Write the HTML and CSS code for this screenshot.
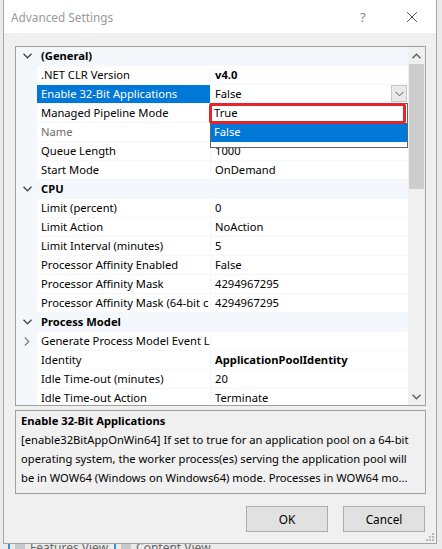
FILE: index.html
```html
<!DOCTYPE html>
<html>
<head>
<meta charset="utf-8">
<title>Advanced Settings</title>
<link rel="stylesheet" href="styles.css">
</head>
<body>
<div class="desktop">
  <div class="dialog">
    <div class="titlebar">
      <span class="title">Advanced Settings</span>
      <span class="help">?</span>
      <span class="close">
        <svg width="12" height="12" viewBox="0 0 12 12"><path d="M1 1L11 11M11 1L1 11" stroke="#555" stroke-width="1" fill="none"/></svg>
      </span>
    </div>

    <div class="content">
      <div class="grid">
        <div class="rows">
          <div class="row cat">
            <span class="gut"><svg width="9" height="6" viewBox="0 0 9 6"><path d="M0.5 0.8L4.5 4.8L8.5 0.8" stroke="#444" stroke-width="1.3" fill="none"/></svg></span>
            <span class="cat-name">(General)</span>
          </div>
          <div class="row"><span class="gut"></span><span class="name">.NET CLR Version</span><span class="val strong">v4.0</span></div>
          <div class="row selected">
            <span class="gut"></span><span class="name">Enable 32-Bit Applications</span>
            <span class="val editor">
              <span class="editor-text">False</span>
              <span class="drop-btn"><svg width="9" height="6" viewBox="0 0 9 6"><path d="M0.5 0.8L4.5 4.8L8.5 0.8" stroke="#555" stroke-width="1" fill="none"/></svg></span>
              <span class="droplist">
                <span class="opt">True</span>
                <span class="opt opt-sel">False</span>
                <span class="mark"></span>
              </span>
            </span>
          </div>
          <div class="row"><span class="gut"></span><span class="name">Managed Pipeline Mode</span><span class="val"></span></div>
          <div class="row"><span class="gut"></span><span class="name disabled">Name</span><span class="val"></span></div>
          <div class="row"><span class="gut"></span><span class="name">Queue Length</span><span class="val">1000</span></div>
          <div class="row"><span class="gut"></span><span class="name">Start Mode</span><span class="val">OnDemand</span></div>

          <div class="row cat">
            <span class="gut"><svg width="9" height="6" viewBox="0 0 9 6"><path d="M0.5 0.8L4.5 4.8L8.5 0.8" stroke="#444" stroke-width="1.3" fill="none"/></svg></span>
            <span class="cat-name">CPU</span>
          </div>
          <div class="row"><span class="gut"></span><span class="name">Limit (percent)</span><span class="val">0</span></div>
          <div class="row"><span class="gut"></span><span class="name">Limit Action</span><span class="val">NoAction</span></div>
          <div class="row"><span class="gut"></span><span class="name">Limit Interval (minutes)</span><span class="val">5</span></div>
          <div class="row"><span class="gut"></span><span class="name">Processor Affinity Enabled</span><span class="val">False</span></div>
          <div class="row"><span class="gut"></span><span class="name">Processor Affinity Mask</span><span class="val">4294967295</span></div>
          <div class="row"><span class="gut"></span><span class="name">Processor Affinity Mask (64-bit c</span><span class="val">4294967295</span></div>

          <div class="row cat">
            <span class="gut"><svg width="9" height="6" viewBox="0 0 9 6"><path d="M0.5 0.8L4.5 4.8L8.5 0.8" stroke="#444" stroke-width="1.3" fill="none"/></svg></span>
            <span class="cat-name">Process Model</span>
          </div>
          <div class="row">
            <span class="gut"><svg width="6" height="9" viewBox="0 0 6 9"><path d="M0.8 0.5L4.8 4.5L0.8 8.5" stroke="#777" stroke-width="1.1" fill="none"/></svg></span>
            <span class="name">Generate Process Model Event L</span><span class="val"></span>
          </div>
          <div class="row"><span class="gut"></span><span class="name">Identity</span><span class="val strong">ApplicationPoolIdentity</span></div>
          <div class="row"><span class="gut"></span><span class="name">Idle Time-out (minutes)</span><span class="val">20</span></div>
          <div class="row"><span class="gut"></span><span class="name">Idle Time-out Action</span><span class="val">Terminate</span></div>
        </div>

        <div class="scrollbar">
          <span class="sb-btn"><svg width="9" height="6" viewBox="0 0 9 6"><path d="M0.5 5.2L4.5 1.2L8.5 5.2" stroke="#606060" stroke-width="1.4" fill="none"/></svg></span>
          <span class="sb-track"><span class="sb-thumb"></span></span>
          <span class="sb-btn"><svg width="9" height="6" viewBox="0 0 9 6"><path d="M0.5 0.8L4.5 4.8L8.5 0.8" stroke="#606060" stroke-width="1.4" fill="none"/></svg></span>
        </div>
      </div>

      <div class="desc">
        <div class="desc-title">Enable 32-Bit Applications</div>
        <div class="desc-line">[enable32BitAppOnWin64] If set to true for an application pool on a 64-bit</div>
        <div class="desc-line">operating system, the worker process(es) serving the application pool will</div>
        <div class="desc-line">be in WOW64 (Windows on Windows64) mode. Processes in WOW64 mo...</div>
      </div>

      <div class="buttons">
        <button class="btn">OK</button>
        <button class="btn">Cancel</button>
      </div>
    </div>

    <svg class="grip" width="8" height="8" viewBox="0 0 8 8">
      <rect x="6" y="0" width="2" height="2" fill="#b8b8b8"/>
      <rect x="3" y="3" width="2" height="2" fill="#b8b8b8"/>
      <rect x="6" y="3" width="2" height="2" fill="#b8b8b8"/>
      <rect x="0" y="6" width="2" height="2" fill="#b8b8b8"/>
      <rect x="3" y="6" width="2" height="2" fill="#b8b8b8"/>
      <rect x="6" y="6" width="2" height="2" fill="#b8b8b8"/>
    </svg>
  </div>

  <div class="tabs">
    <span class="tab"><span class="tab-icon"></span>Features View</span>
    <span class="tab"><span class="tab-icon"></span>Content View</span>
  </div>
</div>
</body>
</html>
```
FILE: styles.css
```css
* { box-sizing: border-box; }

html, body {
  margin: 0;
  padding: 0;
  overflow: hidden;
}

body {
  font-family: "Noto Sans", "Open Sans", sans-serif;
  font-size: 11.2px;
  color: #000;
  background: #e9e9e9;
}

.desktop {
  width: 442px;
  height: 549px;
  overflow: hidden;
  display: flex;
  flex-direction: column;
  background: #ebebeb;
}

/* dialog window */
.dialog {
  position: relative;
  margin-left: 3px;
  width: 434px;
  height: 544px;
  flex: none;
  border: 1px solid #a3a3a3;
  border-top: none;
  display: flex;
  flex-direction: column;
  background: #f0f0f0;
}

.titlebar {
  height: 33px;
  background: #fff;
  display: flex;
  align-items: center;
  padding-left: 7px;
  flex: none;
}

.title {
  color: #9a9a9a;
  font-size: 11.8px;
  flex: 1;
  margin-top: 1px;
}

.help {
  color: #888;
  font-size: 13px;
  width: 12px;
  margin-right: 34px;
  margin-top: 1px;
}

.close {
  width: 12px;
  height: 12px;
  display: flex;
  margin-right: 18px;
  margin-top: 1px;
}

.content {
  flex: 1;
  display: flex;
  flex-direction: column;
  padding: 13px 10px 0 11px;
}

/* property grid */
.grid {
  height: 360px;
  border: 1px solid #a0a0a0;
  display: flex;
  background: #fff;
}

.rows {
  flex: 1;
  overflow: hidden;
  position: relative;
  z-index: 1;
}

.row {
  display: flex;
  height: 19px;
  border-bottom: 1px solid #f4f7fc;
  line-height: 18px;
  white-space: nowrap;
}

.gut {
  width: 21px;
  flex: none;
  background: #f4f7fc;
  display: flex;
  align-items: center;
  justify-content: center;
  padding-left: 1px;
}

.name {
  width: 174px;
  flex: none;
  padding-left: 4px;
  border-right: 1px solid #f4f7fc;
  overflow: hidden;
}

.name.disabled { color: #6d6d6d; }

.val {
  flex: 1;
  padding-left: 4px;
  overflow: hidden;
}

.val.strong { font-weight: bold; }

.cat { background: #f4f7fc; }

.cat-name {
  font-weight: bold;
  padding-left: 4px;
}

.selected .name {
  background: #0078d7;
  color: #fff;
}

/* inline editor with its open list */
.val.editor {
  position: relative;
  overflow: visible;
  display: flex;
  padding-right: 1px;
}

.editor-text { flex: 1; }

.drop-btn {
  width: 16px;
  height: 17px;
  border: 1px solid #c8c8c8;
  background: #eaeaea;
  display: flex;
  align-items: center;
  justify-content: center;
}

.droplist {
  position: absolute;
  top: 18px;
  left: -1px;
  right: 0;
  height: 45px;
  border: 1px solid #646464;
  background: #fff;
  display: flex;
  flex-direction: column;
  z-index: 2;
}

.opt {
  height: 19px;
  line-height: 18px;
  padding-left: 3px;
}

.opt-sel {
  background: #0078d7;
  color: #fff;
}

.mark {
  position: absolute;
  left: -2px;
  top: -1px;
  width: 197px;
  height: 21px;
  border: 3px solid #e3262b;
  border-radius: 3px;
}

/* vertical scrollbar */
.scrollbar {
  width: 17px;
  flex: none;
  background: #f0f0f0;
  display: flex;
  flex-direction: column;
}

.sb-btn {
  height: 17px;
  display: flex;
  align-items: center;
  justify-content: center;
}

.sb-track { flex: 1; }

.sb-thumb {
  display: block;
  margin: 0 1px;
  height: 125px;
  background: #cdcdcd;
}

/* description pane */
.desc {
  margin-top: 4px;
  height: 84px;
  border: 1px solid #a0a0a0;
  padding: 0 5px;
  line-height: 19px;
  white-space: nowrap;
  overflow: hidden;
}

.desc-title { font-weight: bold; }

.buttons {
  display: flex;
  justify-content: flex-end;
  gap: 15px;
  margin-top: 12px;
  padding-right: 1px;
}

.btn {
  width: 82px;
  height: 26px;
  background: #e1e1e1;
  border: 1px solid #adadad;
  font-family: inherit;
  font-size: 11.8px;
  color: #000;
  padding: 0;
}

.grip {
  position: absolute;
  right: 2px;
  bottom: 2px;
}

/* tab strip of the window behind */
.tabs {
  flex: none;
  height: 20px;
  display: flex;
  padding-left: 8px;
  font-size: 12px;
  color: #666;
  line-height: 8px;
  overflow: hidden;
}

.tab {
  display: flex;
  align-items: flex-start;
  border-left: 2px solid #3c8fdc;
  padding: 0 6px 0 5px;
  height: 6px;
  gap: 5px;
}

.tab-icon {
  width: 10px;
  height: 8px;
  background: #c9c9c9;
  margin-top: -2px;
}
```
